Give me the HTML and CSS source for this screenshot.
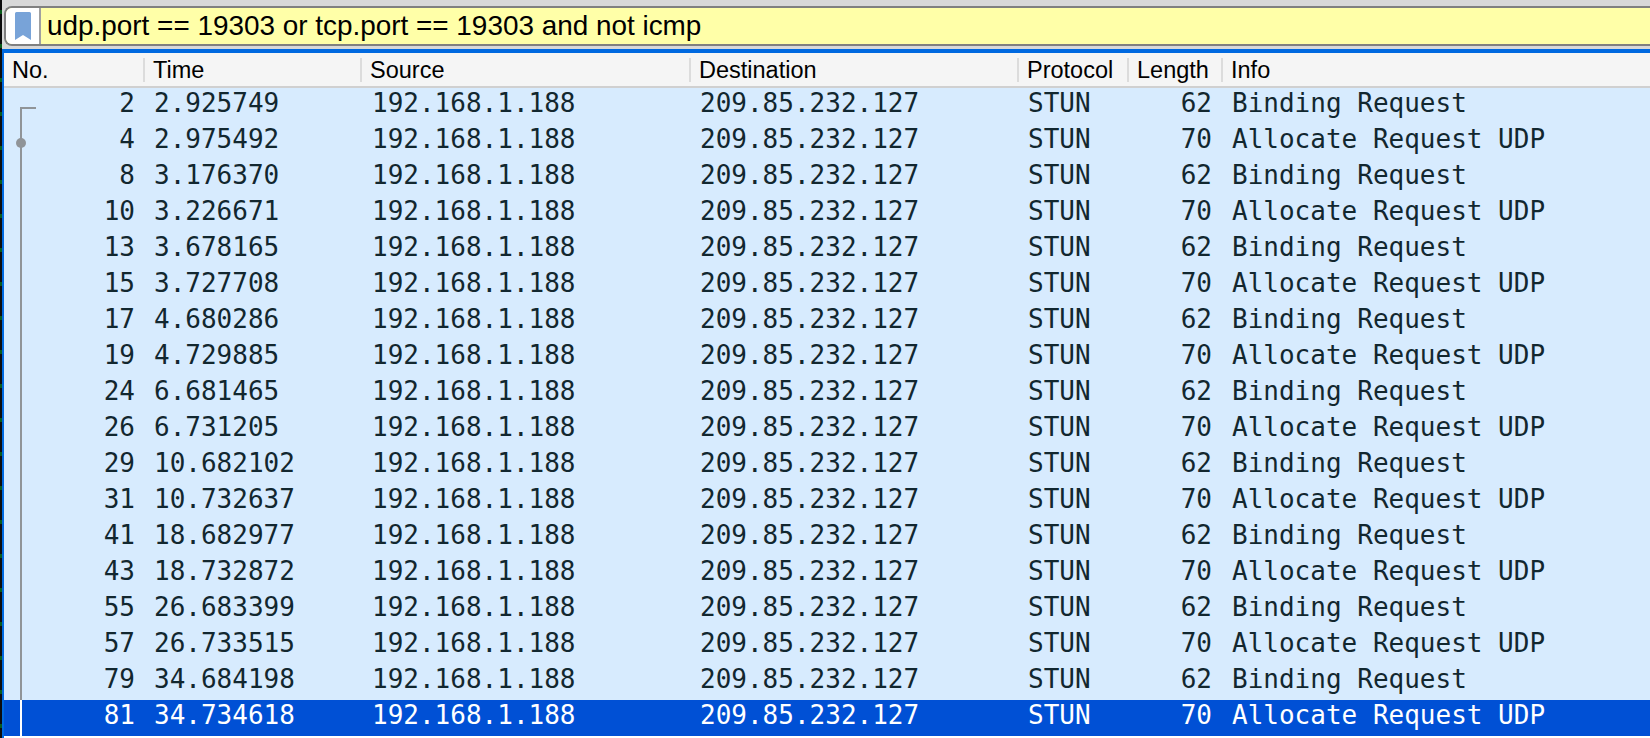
FILE: index.html
```html
<!DOCTYPE html>
<html lang="en">
<head>
<meta charset="utf-8">
<title>Wireshark capture</title>
<link rel="stylesheet" href="styles.css">
</head>
<body>
<div class="window">
<div class="topstrip"></div>
<div class="filterbar">
  <div class="bookmark">
    <svg class="bookmark-icon" width="16" height="28" viewBox="0 0 16 28"><path d="M0 1.5Q0 0 1.5 0H14.5Q16 0 16 1.5V28L8 23L0 28Z" fill="#78a3d8"/></svg>
  </div>
  <div class="filtertext">udp.port == 19303 or tcp.port == 19303 and not icmp</div>
</div>
<div class="gap"></div>
<div class="packets">
  <div class="head">
    <div class="hc">No.</div>
    <div class="hc sep">Time</div>
    <div class="hc sep">Source</div>
    <div class="hc sep">Destination</div>
    <div class="hc sep">Protocol</div>
    <div class="hc sep">Length</div>
    <div class="hc sep">Info</div>
  </div>
  <div class="rows">
    <div class="row"><div class="no first">2</div><div>2.925749</div><div class="src">192.168.1.188</div><div>209.85.232.127</div><div>STUN</div><div class="len">62</div><div>Binding Request</div></div>
    <div class="row"><div class="no dot">4</div><div>2.975492</div><div class="src">192.168.1.188</div><div>209.85.232.127</div><div>STUN</div><div class="len">70</div><div>Allocate Request UDP</div></div>
    <div class="row"><div class="no line">8</div><div>3.176370</div><div class="src">192.168.1.188</div><div>209.85.232.127</div><div>STUN</div><div class="len">62</div><div>Binding Request</div></div>
    <div class="row"><div class="no line">10</div><div>3.226671</div><div class="src">192.168.1.188</div><div>209.85.232.127</div><div>STUN</div><div class="len">70</div><div>Allocate Request UDP</div></div>
    <div class="row"><div class="no line">13</div><div>3.678165</div><div class="src">192.168.1.188</div><div>209.85.232.127</div><div>STUN</div><div class="len">62</div><div>Binding Request</div></div>
    <div class="row"><div class="no line">15</div><div>3.727708</div><div class="src">192.168.1.188</div><div>209.85.232.127</div><div>STUN</div><div class="len">70</div><div>Allocate Request UDP</div></div>
    <div class="row"><div class="no line">17</div><div>4.680286</div><div class="src">192.168.1.188</div><div>209.85.232.127</div><div>STUN</div><div class="len">62</div><div>Binding Request</div></div>
    <div class="row"><div class="no line">19</div><div>4.729885</div><div class="src">192.168.1.188</div><div>209.85.232.127</div><div>STUN</div><div class="len">70</div><div>Allocate Request UDP</div></div>
    <div class="row"><div class="no line">24</div><div>6.681465</div><div class="src">192.168.1.188</div><div>209.85.232.127</div><div>STUN</div><div class="len">62</div><div>Binding Request</div></div>
    <div class="row"><div class="no line">26</div><div>6.731205</div><div class="src">192.168.1.188</div><div>209.85.232.127</div><div>STUN</div><div class="len">70</div><div>Allocate Request UDP</div></div>
    <div class="row"><div class="no line">29</div><div>10.682102</div><div class="src">192.168.1.188</div><div>209.85.232.127</div><div>STUN</div><div class="len">62</div><div>Binding Request</div></div>
    <div class="row"><div class="no line">31</div><div>10.732637</div><div class="src">192.168.1.188</div><div>209.85.232.127</div><div>STUN</div><div class="len">70</div><div>Allocate Request UDP</div></div>
    <div class="row"><div class="no line">41</div><div>18.682977</div><div class="src">192.168.1.188</div><div>209.85.232.127</div><div>STUN</div><div class="len">62</div><div>Binding Request</div></div>
    <div class="row"><div class="no line">43</div><div>18.732872</div><div class="src">192.168.1.188</div><div>209.85.232.127</div><div>STUN</div><div class="len">70</div><div>Allocate Request UDP</div></div>
    <div class="row"><div class="no line">55</div><div>26.683399</div><div class="src">192.168.1.188</div><div>209.85.232.127</div><div>STUN</div><div class="len">62</div><div>Binding Request</div></div>
    <div class="row"><div class="no line">57</div><div>26.733515</div><div class="src">192.168.1.188</div><div>209.85.232.127</div><div>STUN</div><div class="len">70</div><div>Allocate Request UDP</div></div>
    <div class="row"><div class="no line">79</div><div>34.684198</div><div class="src">192.168.1.188</div><div>209.85.232.127</div><div>STUN</div><div class="len">62</div><div>Binding Request</div></div>
    <div class="row selected"><div class="no line">81</div><div>34.734618</div><div class="src">192.168.1.188</div><div>209.85.232.127</div><div>STUN</div><div class="len">70</div><div>Allocate Request UDP</div></div>
  </div>
</div>
</div>
</body>
</html>
```
FILE: styles.css
```css
* { box-sizing: border-box; }
html, body { margin: 0; height: 100%; overflow: hidden; }
body {
  padding-left: 2px;
  background: repeating-linear-gradient(to bottom, #0c0c0c 0 10px, #0a5a1a 10px 14px, #0c0c0c 14px 34px);
}
.window { height: 100%; background: #d8d8d8; display: flex; flex-direction: column; }
.topstrip { height: 6px; flex: none; }
.filterbar {
  display: flex;
  flex: none;
  height: 40px;
  margin-left: 2px;
  border: 2px solid #808080;
  border-right: 0;
  border-radius: 8px 0 0 8px;
  background: #ffffa8;
  overflow: hidden;
}
.bookmark {
  width: 35px;
  flex: none;
  display: flex;
  align-items: center;
  justify-content: center;
  background: #fff;
  border-right: 2px solid #a0a0a0;
}
.filtertext {
  padding-left: 6px;
  font: 27.9px/35px "Liberation Sans", Arial, sans-serif;
  color: #000;
  white-space: pre;
}
.gap { height: 3px; flex: none; }
.packets { flex: 1; border-top: 4px solid #0069e0; border-left: 2px solid #0069e0; background: #fff; }
.head {
  display: grid;
  grid-template-columns: 139px 217px 329px 328px 110px 94px 1fr;
  height: 35px;
  background: #f5f5f5;
  border-bottom: 2px solid #d0d0d0;
  padding-top: 5px;
  font: 23.5px/24px "Liberation Sans", Arial, sans-serif;
  color: #000;
}
.hc { padding-left: 8px; height: 24px; white-space: pre; }
.sep { border-left: 2px solid #dcdcdc; }
.rows { display: flex; flex-direction: column; }
.row {
  display: grid;
  grid-template-columns: 139px 217px 329px 328px 110px 94px 1fr;
  height: 36px;
  background: #d7ebfe;
  color: #12272f;
  font: 26px/30px "DejaVu Sans Mono", monospace;
}
.row > div { padding-left: 11px; white-space: pre; }
.row > .src { padding-left: 12px; }
.row > .no { text-align: right; padding: 0 8px 0 0; position: relative; }
.row > .len { text-align: right; padding: 0 9px 0 0; }
.selected { background: #0050d5; color: #fff; }
.no::before { content: ""; position: absolute; left: 16px; width: 2px; background: #909498; }
.first::before { top: 19px; bottom: 0; }
.first::after { content: ""; position: absolute; left: 16px; top: 19px; width: 16px; height: 2px; background: #909498; }
.line::before { top: 0; bottom: 0; }
.dot::before { top: 0; bottom: 0; }
.dot::after { content: ""; position: absolute; left: 12px; top: 14px; width: 10px; height: 10px; border-radius: 50%; background: #909498; }
.selected .no::before { background: #fff; }
```
